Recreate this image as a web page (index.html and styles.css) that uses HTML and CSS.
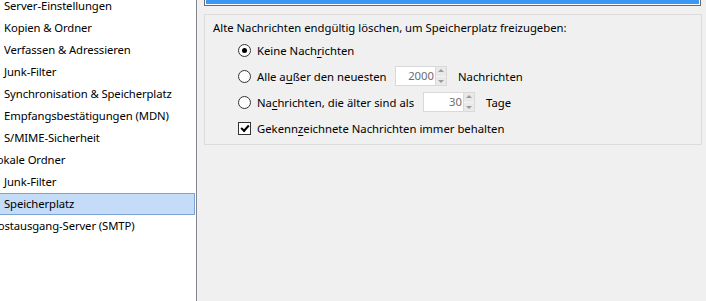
FILE: index.html
```html
<!DOCTYPE html>
<html lang="de">
<head>
    <meta charset="UTF-8">
    <title>Speicherplatz</title>
    <link rel="stylesheet" href="styles.css">
</head>
<body>
    <div class="tree">
        <div class="item sub">Server-Einstellungen</div>
        <div class="item sub">Kopien &amp; Ordner</div>
        <div class="item sub">Verfassen &amp; Adressieren</div>
        <div class="item sub">Junk-Filter</div>
        <div class="item sub">Synchronisation &amp; Speicherplatz</div>
        <div class="item sub">Empfangsbestätigungen (MDN)</div>
        <div class="item sub">S/MIME-Sicherheit</div>
        <div class="item top">Lokale Ordner</div>
        <div class="item sub">Junk-Filter</div>
        <div class="item sub selected">Speicherplatz</div>
        <div class="item top">Postausgang-Server (SMTP)</div>
    </div>

    <div class="pane">
        <div class="header"></div>
        <div class="group">
            <div class="caption">Alte Nachrichten endgültig löschen, um Speicherplatz freizugeben:</div>
            <div class="row">
                <span class="radio checked"></span>
                <span class="label">Keine Nach<u>r</u>ichten</span>
            </div>
            <div class="row">
                <span class="radio"></span>
                <span class="label w1">Alle a<u>u</u>ßer den neuesten</span>
                <span class="spin"><span class="value">2000</span><span class="arrows"><span class="up"></span><span class="down"></span></span></span>
                <span class="label after">Nachrichten</span>
            </div>
            <div class="row">
                <span class="radio"></span>
                <span class="label w2">Na<u>c</u>hrichten, die älter sind als</span>
                <span class="spin"><span class="value">30</span><span class="arrows"><span class="up"></span><span class="down"></span></span></span>
                <span class="label after">Tage</span>
            </div>
            <div class="row">
                <span class="check"></span>
                <span class="label">Gekenn<u>z</u>eichnete Nachrichten immer behalten</span>
            </div>
        </div>
    </div>
</body>
</html>
```

FILE: styles.css
```css
body {
    margin: 0;
    display: flex;
    height: 301px;
    overflow: hidden;
    font-family: "Noto Sans", sans-serif;
    font-size: 11.3px;
    color: #000;
    background: #f0f0f0;
}
.tree {
    width: 196px;
    flex: none;
    background: white;
    border-right: 1px solid #828790;
    overflow: hidden;
    letter-spacing: -0.1px;
}
.item {
    height: 22px;
    line-height: 21px;
    white-space: nowrap;
    box-sizing: border-box;
}
.item:first-child {
    margin-top: -5px;
}
.sub {
    padding-left: 4px;
}
.top {
    margin-left: -9px;
}
.selected {
    background: #c5dcf8;
    border: 1px solid #7da3d6;
    border-left: none;
    margin-right: 1px;
    line-height: 20px;
}
.pane {
    flex: 1;
    padding: 0 4px 0 7px;
}
.header {
    height: 5px;
    margin-right: 1px;
    background: #3a98f4;
    border: 1px solid #6a6a6a;
    border-top: none;
    box-shadow: inset 1px 0 0 #fff, inset -1px 0 0 #fff, inset 0 -1px 0 #fff;
}
.group {
    margin-top: 8px;
    height: 131px;
    box-sizing: border-box;
    border: 1px solid #dcdcdc;
    padding: 5px 0 0 8px;
}
.caption {
    height: 16px;
    line-height: 16px;
    margin-bottom: 1px;
    white-space: nowrap;
}
.row {
    height: 26px;
    display: flex;
    align-items: center;
    padding-left: 25px;
    white-space: nowrap;
}
.radio, .check {
    width: 13px;
    height: 13px;
    box-sizing: border-box;
    border: 1px solid #333;
    background: white;
    flex: none;
    margin-right: 6px;
    display: flex;
    align-items: center;
    justify-content: center;
}
.radio {
    border-radius: 50%;
}
.radio.checked::after {
    content: "";
    width: 5px;
    height: 5px;
    border-radius: 50%;
    background: #000;
}
.check::after {
    content: "";
    width: 6px;
    height: 3px;
    border-left: 2px solid #000;
    border-bottom: 2px solid #000;
    transform: translate(0, -1px) rotate(-48deg);
}
.label u {
    text-decoration-thickness: 1px;
    text-underline-offset: 2px;
}
.w1 {
    width: 138px;
    flex: none;
}
.w2 {
    width: 166px;
    flex: none;
}
.after {
    margin-left: 11px;
}
.spin {
    display: flex;
    height: 20px;
    width: 52px;
    flex: none;
    box-sizing: border-box;
}
.value {
    flex: 1;
    background: white;
    border: 1px solid #d9d9d9;
    border-right: none;
    color: #6d6d6d;
    text-align: right;
    line-height: 18px;
    padding-right: 1px;
}
.arrows {
    width: 12px;
    display: flex;
    flex-direction: column;
    border: 1px solid #d9d9d9;
    box-sizing: border-box;
}
.up, .down {
    flex: 1;
    background: #e9e9e9;
    position: relative;
}
.up {
    border-bottom: 1px solid #f6f6f6;
}
.up::after, .down::after {
    content: "";
    position: absolute;
    left: 2px;
    border-left: 3px solid transparent;
    border-right: 3px solid transparent;
}
.up::after {
    top: 2px;
    border-bottom: 3px solid #9a9a9a;
}
.down::after {
    top: 3px;
    border-top: 3px solid #9a9a9a;
}
```
